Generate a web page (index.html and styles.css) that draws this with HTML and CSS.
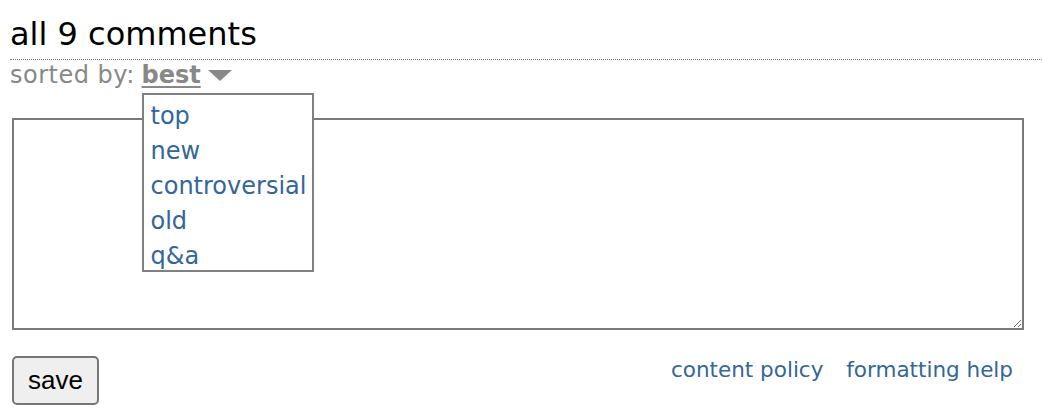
FILE: index.html
```html
<!DOCTYPE html>
<html lang="en">
<head>
    <meta charset="UTF-8">
    <title>all 9 comments</title>
    <link rel="stylesheet" href="styles.css">
</head>
<body>
    <div class="panestack-title">
        <span class="title">all 9 comments</span>
    </div>
    <div class="menuarea">
        <span class="sort-label">sorted by:</span>
        <span class="dropdown">
            <span class="selected">best</span><span class="caret"></span>
            <!-- open sort menu -->
            <div class="drop-choices">
                <a href="#" class="choice">top</a>
                <a href="#" class="choice">new</a>
                <a href="#" class="choice">controversial</a>
                <a href="#" class="choice">old</a>
                <a href="#" class="choice">q&amp;a</a>
            </div>
        </span>
    </div>

    <form class="usertext">
        <textarea class="usertext-edit" rows="1" cols="1"></textarea>
        <div class="bottom-area">
            <button type="button" class="save">save</button>
            <div class="help-links">
                <a href="#">content policy</a>
                <a href="#">formatting help</a>
            </div>
        </div>
    </form>
</body>
</html>
```

FILE: styles.css
```css
body {
    margin: 0;
    font-family: 'DejaVu Sans', Verdana, sans-serif;
    background-color: #fff;
    color: #000;
}
a {
    color: #369;
    text-decoration: none;
}
.panestack-title {
    margin-left: 10px;
    padding-top: 15px;
    padding-bottom: 6px;
    border-bottom: 1px dotted #777;
}
.panestack-title .title {
    font-size: 32px;
    display: block;
}
.menuarea {
    margin-left: 10px;
    margin-top: 1px;
    font-size: 24px;
    color: #888;
}
.sort-label {
    letter-spacing: 0.5px;
    margin-right: -1px;
}
.dropdown {
    position: relative;
}
.dropdown .selected {
    font-weight: bold;
    text-decoration: underline;
    text-underline-offset: 3px;
}
.dropdown .caret {
    display: inline-block;
    width: 0;
    height: 0;
    margin-left: 7px;
    border-left: 12px solid transparent;
    border-right: 12px solid transparent;
    border-top: 11px solid #888;
    vertical-align: 2px;
}
.drop-choices {
    position: absolute;
    left: 0;
    top: 32px;
    z-index: 2;
    background-color: #fff;
    border: 2px solid #808080;
    padding: 4px 6px 0 7px;
    line-height: 35px;
}
.drop-choices .choice {
    display: block;
    white-space: nowrap;
}
.drop-choices .choice:last-child {
    margin-bottom: -4px;
}
.usertext {
    margin: 29px 18px 0 12px;
}
.usertext-edit {
    display: block;
    box-sizing: border-box;
    width: 1012px;
    height: 212px;
    margin: 0;
    border: 2px solid #7a7a7a;
    font-family: 'DejaVu Sans', sans-serif;
    font-size: 22px;
}
.bottom-area {
    display: flex;
    justify-content: space-between;
    align-items: flex-start;
    margin-top: 26px;
    width: 1012px;
}
.save {
    font-family: 'Liberation Sans', Arial, sans-serif;
    font-size: 26px;
    padding: 7px 14px;
    background-color: #efefef;
    border: 2px solid #767676;
    border-radius: 5px;
    color: #000;
}
.help-links {
    font-size: 21.5px;
    margin-top: 1px;
    margin-right: 11px;
}
.help-links a {
    margin-left: 16px;
}
```
